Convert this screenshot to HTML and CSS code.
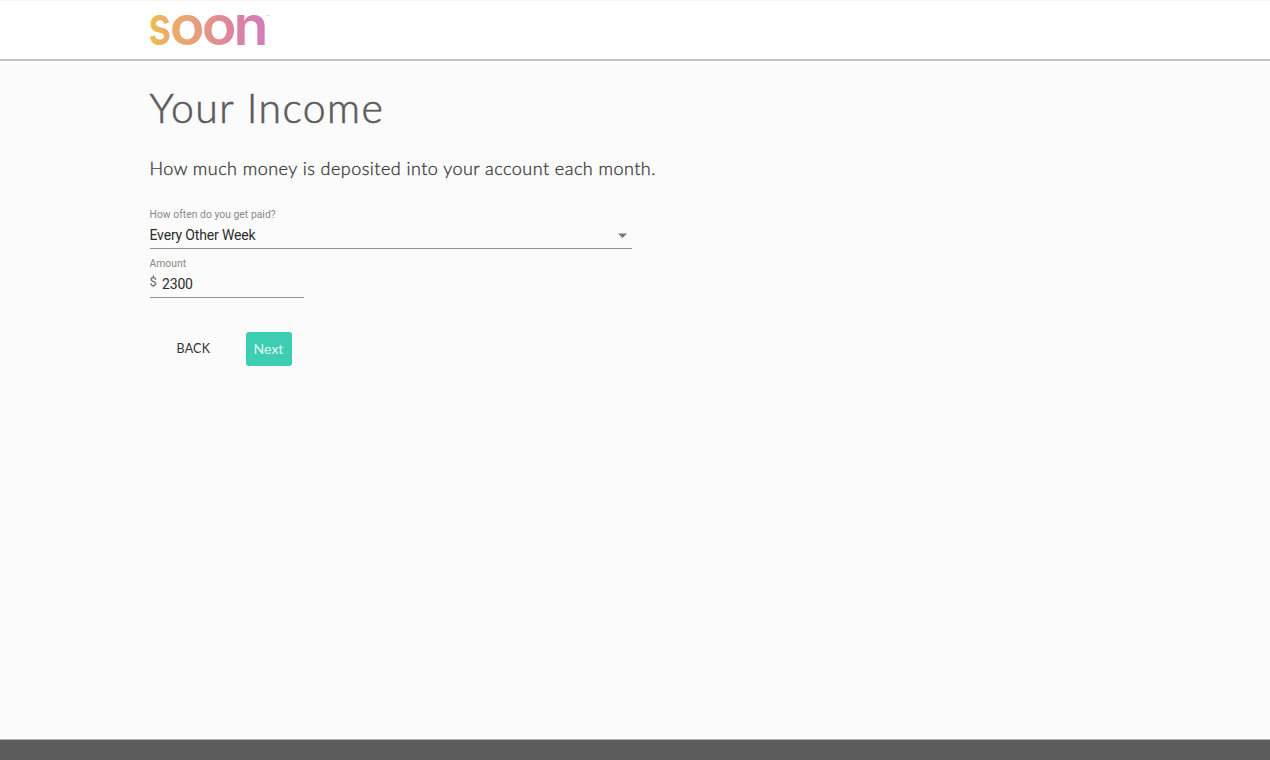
FILE: index.html
```html
<!DOCTYPE html>
<html lang="en">
<head>
<meta charset="utf-8">
<title>Soon - Your Income</title>
<link rel="stylesheet" href="styles.css">
</head>
<body>
<header class="header">
  <svg class="logo" width="126" height="44" viewBox="0 -7 126 44" role="img" aria-label="soon">
    <defs>
      <linearGradient id="brand" gradientUnits="userSpaceOnUse" x1="0" y1="0" x2="116" y2="0">
        <stop offset="0" stop-color="#ecc04c"/>
        <stop offset="0.35" stop-color="#e8a17c"/>
        <stop offset="0.7" stop-color="#dc839f"/>
        <stop offset="1" stop-color="#d17cc0"/>
      </linearGradient>
    </defs>
    <text class="logo-word" transform="scale(.76 1)" x="-1" y="33" fill="url(#brand)">s</text>
    <text class="logo-word" transform="scale(1.04 1)" x="19.9 50.7 81.3" y="33" fill="url(#brand)">oon</text>
    <text class="logo-mark" x="117" y="6">™</text>
  </svg>
</header>
<main class="content">
  <h1 class="title">Your Income</h1>
  <p class="lead">How much money is deposited into your account each month.</p>
  <form class="form">
    <div class="field field-wide">
      <span class="label">How often do you get paid?</span>
      <div class="control"><span>Every Other Week</span>
        <svg class="caret" width="9" height="5" viewBox="0 0 9 5"><path d="M0 .5h9L4.500 5z" fill="#777"/></svg>
      </div>
    </div>
    <div class="field field-amount">
      <span class="label">Amount</span>
      <div class="control"><span class="prefix">$</span><span>2300</span></div>
    </div>
    <div class="actions">
      <button class="back" type="button">BACK</button>
      <button class="next" type="button">Next</button>
    </div>
  </form>
</main>
<footer class="footer"></footer>
</body>
</html>
```
FILE: styles.css
```css
* { box-sizing: border-box; }
body {
  margin: 0;
  height: 760px;
  display: flex;
  flex-direction: column;
  overflow: hidden;
  background: #fbfbfb;
  font-family: Roboto, sans-serif;
}
.header {
  height: 61px;
  padding: 4px 0 0 149px;
  background: #fff;
  border-top: 1px solid #f4f4f4;
  border-bottom: 2px solid #c4c4c4;
}
.logo { display: block; overflow: visible; }
.logo-word { font: 600 55px/1 Inter, sans-serif; }
.logo-mark { font: 4px Lato, sans-serif; fill: #d9a5c4; }
.content { flex: 1; padding: 23px 0 0 149.5px; }
.title {
  margin: 0;
  font: 300 41px/47px Lato, sans-serif;
  letter-spacing: 1.4px;
  color: #5c5c5c;
  -webkit-text-stroke: 0.6px #5c5c5c;
}
.lead {
  margin: 25px 0 0;
  font: 300 18px/24px Lato, sans-serif;
  letter-spacing: 0.46px;
  color: #404040;
  -webkit-text-stroke: 0.35px #404040;
  white-space: nowrap;
}
.form { padding-top: 28px; }
.field { height: 49px; display: flex; flex-direction: column; }
.field-wide { width: 482.5px; }
.field-amount { width: 154.5px; }
.label {
  height: 13px;
  font-size: 10.3px;
  line-height: 13px;
  letter-spacing: 0.05px;
  color: #888;
}
.control {
  height: 28px;
  display: flex;
  align-items: center;
  padding: 1px 5px 0 0;
  border-bottom: 1px solid #949494;
  font-size: 14px;
  letter-spacing: -0.17px;
  color: #2c2c2c;
}
.caret { margin-left: auto; }
.prefix { width: 12.5px; padding-bottom: 5px; font-size: 13px; color: #666; }
.actions { display: flex; align-items: center; padding: 26px 0 0 27px; }
.actions button { border: 0; padding: 0 0 2px; height: 34px; font-family: Lato, sans-serif; }
.actions .back {
  width: 69px;
  padding-bottom: 1px;
  text-align: left;
  background: none;
  color: #333;
  font-size: 12.5px;
  letter-spacing: 0.2px;
}
.actions .next {
  width: 46px;
  border-radius: 3px;
  background: #3ccdb2;
  color: #e4f8f3;
  font-size: 14px;
}
.footer { height: 21px; background: #5c5c5c; border-top: 1px solid #b4b4b4; }
```
